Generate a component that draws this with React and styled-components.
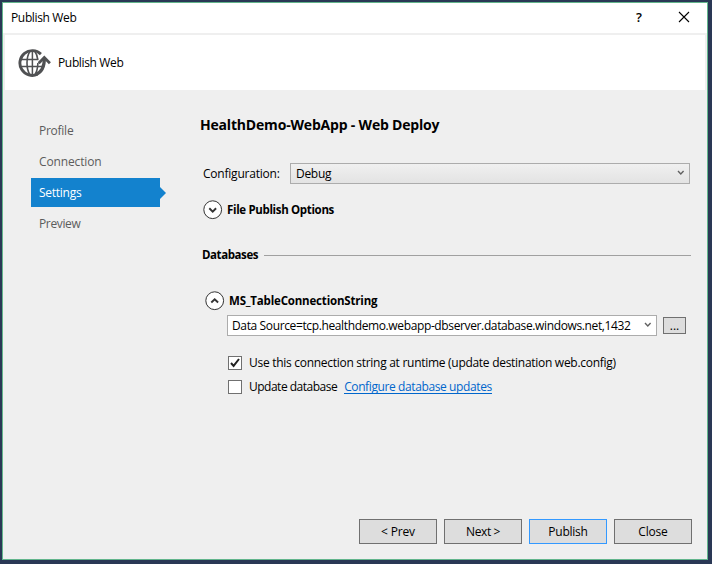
import React from "react";
import styled, { createGlobalStyle } from "styled-components";

const GlobalStyle = createGlobalStyle`
  * { box-sizing: border-box; }
  html, body { margin: 0; height: 100%; overflow: hidden; }
  body { background: #2a3855; }
  body, button { font: 12px/16px "Open Sans", "Noto Sans", sans-serif; color: #000; }
`;

const Desktop = styled.div`
  width: 712px;
  height: 564px;
  padding: 2px 4px 4px 2px;
  background: #2a3855;
`;

const Dialog = styled.main`
  display: flex;
  flex-direction: column;
  width: 706px;
  height: 558px;
  border: 1px solid #62b58c;
  background: #efefef;
`;

const Text = styled.span`
  white-space: pre;
  letter-spacing: ${(p) => p.$track || 0}px;
`;

const TitleBar = styled.header`
  display: flex;
  align-items: center;
  height: 30px;
  padding: 0 17px 0 8px;
  background: #fff;
`;

const WindowControls = styled.div`
  display: flex;
  align-items: center;
  gap: 36px;
  margin-left: auto;
  padding-bottom: 2px;
`;

const HelpGlyph = styled.span`
  font: 600 13px/16px "Open Sans", sans-serif;
`;

const Banner = styled.section`
  display: flex;
  align-items: center;
  gap: 7px;
  height: 55px;
  margin: 2px 2px 0;
  padding-left: 13px;
  background: #fff;
`;

const Body = styled.div`
  display: flex;
  flex: 1;
`;

const Nav = styled.nav`
  display: flex;
  flex-direction: column;
  gap: 2px;
  width: 163px;
  padding: 26px 0 0 28px;
`;

const NavItem = styled.a`
  display: flex;
  align-items: center;
  width: 129px;
  height: 29px;
  padding-left: 8px;
  color: ${(p) => (p.$active ? "#fff" : "#5c5c5c")};
  background: ${(p) => (p.$active ? "#1382ce" : "transparent")};
`;

const NavArrow = styled.svg`
  flex: none;
  width: 6px;
  height: 12px;
  margin: 0 -6px 0 auto;
`;

const Content = styled.section`
  display: flex;
  flex-direction: column;
  width: 491px;
  margin-left: 34px;
`;

const Heading = styled.h1`
  height: 20px;
  margin: 25px 0 0;
  font-size: 14px;
  line-height: 20px;
  font-weight: 700;
`;

const ConfigRow = styled.div`
  display: flex;
  align-items: center;
  height: 21px;
  margin-top: 28px;
  padding-left: 3px;
`;

const ConfigLabel = styled.label`
  width: 87px;
`;

const Select = styled.div`
  display: flex;
  align-items: center;
  justify-content: space-between;
  width: ${(p) => p.$width}px;
  height: 21px;
  padding: 0 4px 0 ${(p) => p.$inset}px;
  border: 1px solid #acacac;
  background: ${(p) => (p.$editable ? "#fff" : "linear-gradient(#f0f0f0, #e3e3e3)")};
`;

const Expander = styled.div`
  display: flex;
  align-items: center;
  gap: 4px;
  height: 20px;
  margin: ${(p) => p.$top}px 0 0 ${(p) => p.$left}px;
  font-size: 11.5px;
  font-weight: 700;
`;

const GroupTitle = styled.div`
  display: flex;
  align-items: center;
  gap: 6px;
  height: 18px;
  margin-top: 26px;
  padding-left: 2px;
  font-size: 11.5px;
  font-weight: 700;
`;

const Rule = styled.hr`
  flex: 1;
  height: 1px;
  margin: 0;
  border: 0;
  background: #a0a0a0;
`;

const ConnectionRow = styled.div`
  display: flex;
  align-items: center;
  gap: 6px;
  margin: 4px 0 0 27px;
`;

const Button = styled.button`
  display: flex;
  align-items: center;
  justify-content: center;
  width: 78px;
  height: 25px;
  padding: 0;
  border: 1px solid ${(p) => (p.$primary ? "#3399ff" : "#707070")};
  background: #dddddd;
`;

const BrowseButton = styled(Button)`
  width: 23px;
  height: 17px;
`;

const CheckRow = styled.div`
  display: flex;
  align-items: center;
  gap: 7px;
  height: 16px;
  margin: ${(p) => p.$top}px 0 0 28px;
`;

const CheckBox = styled.span`
  display: flex;
  width: 14px;
  height: 14px;
  border: 1px solid #707070;
  background: #fff;
`;

const Link = styled.a`
  height: 14px;
  line-height: 14px;
  border-bottom: 1px solid #0066cc;
  color: #0066cc;
`;

const Footer = styled.footer`
  display: flex;
  justify-content: flex-end;
  gap: 7px;
  padding: 0 15px 15px 0;
`;

const ChevronIcon = styled.svg`
  width: 8px;
  height: 6px;
  margin-bottom: 2px;
`;

const Chevron = () => (
  <ChevronIcon viewBox="0 0 8 6" fill="none">
    <path d="M1 1L3.8 3.9L6.6 1" stroke="#606060" strokeWidth="1.4" />
  </ChevronIcon>
);

const CircleArrow = ({ up }) => (
  <svg width="20" height="20" viewBox="0 0 20 20" fill="none">
    <circle cx="9.7" cy="9.7" r="8.9" fill="#fff" stroke="#333" strokeWidth="1" />
    <path
      d={up ? "M6.3 11.5L9.7 8.2L13.1 11.5" : "M6.3 8.3L9.7 11.6L13.1 8.3"}
      stroke="#333"
      strokeWidth="1.9"
    />
  </svg>
);

const PublishIcon = () => (
  <svg width="33" height="30" viewBox="0 0 33 30" fill="none" stroke="#505153">
    <path d="M22.9 6.1A12.4 12.4 0 1 0 19.5 26.3" strokeWidth="2.9" />
    <path
      d="M12 3.2C8 9 8 21 12 26.8M16.8 3.2C18.5 5.6 19.4 8.2 19.7 11.4M19.9 15C19.7 20 18.8 24 16.8 26.8"
      strokeWidth="1.6"
    />
    <path d="M14.4 3V27M3 11.5H20.5M3 18.5H25" strokeWidth="1.5" />
    <path d="M17.5 26.6C23.8 24.2 26.6 18.6 26.3 10" strokeWidth="3.2" />
    <path d="M20.7 15.2L26.3 9.6L31.9 15.2" strokeWidth="2.8" />
  </svg>
);

const steps = [
  ["Profile", -0.26],
  ["Connection", -0.13],
  ["Settings", -0.26],
  ["Preview", -0.36],
];

export default function App() {
  return (
    <Desktop>
      <GlobalStyle />
      <Dialog>
        <TitleBar>
          <Text $track={-0.35}>Publish Web</Text>
          <WindowControls>
            <HelpGlyph>?</HelpGlyph>
            <svg width="12" height="12" viewBox="0 0 12 12">
              <path d="M1 1L11 11M11 1L1 11" stroke="#000" strokeWidth="1.1" />
            </svg>
          </WindowControls>
        </TitleBar>
        <Banner>
          <PublishIcon />
          <Text $track={-0.35}>Publish Web</Text>
        </Banner>
        <Body>
          <Nav>
            {steps.map(([name, track]) => (
              <NavItem key={name} $active={name === "Settings"}>
                <Text $track={track}>{name}</Text>
                {name === "Settings" && (
                  <NavArrow viewBox="0 0 6 12">
                    <path d="M0 0L6 6L0 12Z" fill="#1382ce" />
                  </NavArrow>
                )}
              </NavItem>
            ))}
          </Nav>
          <Content>
            <Heading>
              <Text $track={-0.19}>HealthDemo-WebApp - Web Deploy</Text>
            </Heading>
            <ConfigRow>
              <ConfigLabel>
                <Text $track={-0.22}>Configuration:</Text>
              </ConfigLabel>
              <Select $width={400} $inset={5}>
                <Text $track={-0.3}>Debug</Text>
                <Chevron />
              </Select>
            </ConfigRow>
            <Expander $top={16} $left={3}>
              <CircleArrow />
              <Text $track={-0.34}>File Publish Options</Text>
            </Expander>
            <GroupTitle>
              <Text $track={-0.42}>Databases</Text>
              <Rule />
            </GroupTitle>
            <Expander $top={27} $left={5}>
              <CircleArrow up />
              <Text $track={-0.18}>MS_TableConnectionString</Text>
            </Expander>
            <ConnectionRow>
              <Select $width={430} $inset={4} $editable>
                <Text $track={-0.37}>
                  Data Source=tcp.healthdemo.webapp-dbserver.database.windows.net,1432
                </Text>
                <Chevron />
              </Select>
              <BrowseButton>...</BrowseButton>
            </ConnectionRow>
            <CheckRow $top={19}>
              <CheckBox>
                <svg width="12" height="12" viewBox="0 0 12 12" fill="none">
                  <path d="M2 6L4.6 8.9L10 2" stroke="#212121" strokeWidth="2" />
                </svg>
              </CheckBox>
              <Text $track={-0.285}>
                Use this connection string at runtime (update destination web.config)
              </Text>
            </CheckRow>
            <CheckRow $top={8}>
              <CheckBox />
              <Text $track={-0.5}>Update database</Text>
              <Link>
                <Text $track={-0.39}>Configure database updates</Text>
              </Link>
            </CheckRow>
          </Content>
        </Body>
        <Footer>
          <Button><Text $track={-0.15}>{"< Prev"}</Text></Button>
          <Button><Text $track={-0.4}>{"Next >"}</Text></Button>
          <Button $primary><Text $track={-0.25}>Publish</Text></Button>
          <Button><Text $track={-0.2}>Close</Text></Button>
        </Footer>
      </Dialog>
    </Desktop>
  );
}
